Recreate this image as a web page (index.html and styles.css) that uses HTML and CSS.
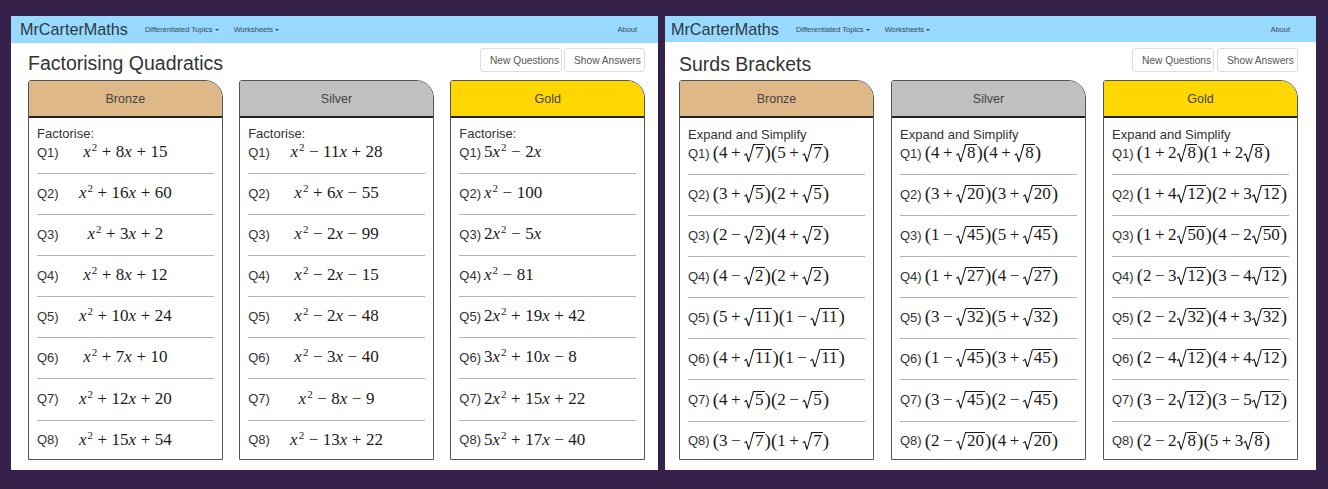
FILE: index.html
```html
<!DOCTYPE html>
<html lang="en">
  <head>
    <meta charset="UTF-8" />
    <title>MrCarterMaths</title>
    <link rel="stylesheet" href="styles.css">
  </head>
  <body>
    <div class="screen">
      <!-- left window -->
      <div class="panel panel-left">
        <div class="navbar">
          <a class="brand">MrCarterMaths</a>
          <a class="nav-link">Differentiated Topics<span class="caret"></span></a>
          <a class="nav-link">Worksheets<span class="caret"></span></a>
          <a class="nav-link about">About</a>
        </div>
        <div class="content">
          <div class="title-row">
            <h1 class="title">Factorising Quadratics</h1>
            <div class="buttons">
              <button class="btn">New Questions</button>
              <button class="btn">Show Answers</button>
            </div>
          </div>
          <div class="cards">
            <div class="card">
              <div class="card-head bronze">Bronze</div>
              <div class="card-body centred">
                <div class="instr">Factorise:</div>
                <div class="q"><span class="qn">Q1)</span><span class="m"><i>x</i><sup>2</sup><b>+</b>8<i>x</i><b>+</b>15</span></div>
                <div class="q"><span class="qn">Q2)</span><span class="m"><i>x</i><sup>2</sup><b>+</b>16<i>x</i><b>+</b>60</span></div>
                <div class="q"><span class="qn">Q3)</span><span class="m"><i>x</i><sup>2</sup><b>+</b>3<i>x</i><b>+</b>2</span></div>
                <div class="q"><span class="qn">Q4)</span><span class="m"><i>x</i><sup>2</sup><b>+</b>8<i>x</i><b>+</b>12</span></div>
                <div class="q"><span class="qn">Q5)</span><span class="m"><i>x</i><sup>2</sup><b>+</b>10<i>x</i><b>+</b>24</span></div>
                <div class="q"><span class="qn">Q6)</span><span class="m"><i>x</i><sup>2</sup><b>+</b>7<i>x</i><b>+</b>10</span></div>
                <div class="q"><span class="qn">Q7)</span><span class="m"><i>x</i><sup>2</sup><b>+</b>12<i>x</i><b>+</b>20</span></div>
                <div class="q"><span class="qn">Q8)</span><span class="m"><i>x</i><sup>2</sup><b>+</b>15<i>x</i><b>+</b>54</span></div>
              </div>
            </div>
            <div class="card">
              <div class="card-head silver">Silver</div>
              <div class="card-body centred">
                <div class="instr">Factorise:</div>
                <div class="q"><span class="qn">Q1)</span><span class="m"><i>x</i><sup>2</sup><b>−</b>11<i>x</i><b>+</b>28</span></div>
                <div class="q"><span class="qn">Q2)</span><span class="m"><i>x</i><sup>2</sup><b>+</b>6<i>x</i><b>−</b>55</span></div>
                <div class="q"><span class="qn">Q3)</span><span class="m"><i>x</i><sup>2</sup><b>−</b>2<i>x</i><b>−</b>99</span></div>
                <div class="q"><span class="qn">Q4)</span><span class="m"><i>x</i><sup>2</sup><b>−</b>2<i>x</i><b>−</b>15</span></div>
                <div class="q"><span class="qn">Q5)</span><span class="m"><i>x</i><sup>2</sup><b>−</b>2<i>x</i><b>−</b>48</span></div>
                <div class="q"><span class="qn">Q6)</span><span class="m"><i>x</i><sup>2</sup><b>−</b>3<i>x</i><b>−</b>40</span></div>
                <div class="q"><span class="qn">Q7)</span><span class="m"><i>x</i><sup>2</sup><b>−</b>8<i>x</i><b>−</b>9</span></div>
                <div class="q"><span class="qn">Q8)</span><span class="m"><i>x</i><sup>2</sup><b>−</b>13<i>x</i><b>+</b>22</span></div>
              </div>
            </div>
            <div class="card">
              <div class="card-head gold">Gold</div>
              <div class="card-body">
                <div class="instr">Factorise:</div>
                <div class="q"><span class="qn">Q1)</span><span class="m">5<i>x</i><sup>2</sup><b>−</b>2<i>x</i></span></div>
                <div class="q"><span class="qn">Q2)</span><span class="m"><i>x</i><sup>2</sup><b>−</b>100</span></div>
                <div class="q"><span class="qn">Q3)</span><span class="m">2<i>x</i><sup>2</sup><b>−</b>5<i>x</i></span></div>
                <div class="q"><span class="qn">Q4)</span><span class="m"><i>x</i><sup>2</sup><b>−</b>81</span></div>
                <div class="q"><span class="qn">Q5)</span><span class="m">2<i>x</i><sup>2</sup><b>+</b>19<i>x</i><b>+</b>42</span></div>
                <div class="q"><span class="qn">Q6)</span><span class="m">3<i>x</i><sup>2</sup><b>+</b>10<i>x</i><b>−</b>8</span></div>
                <div class="q"><span class="qn">Q7)</span><span class="m">2<i>x</i><sup>2</sup><b>+</b>15<i>x</i><b>+</b>22</span></div>
                <div class="q"><span class="qn">Q8)</span><span class="m">5<i>x</i><sup>2</sup><b>+</b>17<i>x</i><b>−</b>40</span></div>
              </div>
            </div>
          </div>
        </div>
      </div>

      <!-- right window -->
      <div class="panel panel-right">
        <div class="navbar">
          <a class="brand">MrCarterMaths</a>
          <a class="nav-link">Differentiated Topics<span class="caret"></span></a>
          <a class="nav-link">Worksheets<span class="caret"></span></a>
          <a class="nav-link about">About</a>
        </div>
        <div class="content">
          <div class="title-row">
            <h1 class="title">Surds Brackets</h1>
            <div class="buttons">
              <button class="btn">New Questions</button>
              <button class="btn">Show Answers</button>
            </div>
          </div>
          <div class="cards">
            <div class="card">
              <div class="card-head bronze">Bronze</div>
              <div class="card-body">
                <div class="instr">Expand and Simplify</div>
                <div class="q"><span class="qn">Q1)</span><span class="m"><u>(</u>4<b>+</b><s>7</s><u>)</u><u>(</u>5<b>+</b><s>7</s><u>)</u></span></div>
                <div class="q"><span class="qn">Q2)</span><span class="m"><u>(</u>3<b>+</b><s>5</s><u>)</u><u>(</u>2<b>+</b><s>5</s><u>)</u></span></div>
                <div class="q"><span class="qn">Q3)</span><span class="m"><u>(</u>2<b>−</b><s>2</s><u>)</u><u>(</u>4<b>+</b><s>2</s><u>)</u></span></div>
                <div class="q"><span class="qn">Q4)</span><span class="m"><u>(</u>4<b>−</b><s>2</s><u>)</u><u>(</u>2<b>+</b><s>2</s><u>)</u></span></div>
                <div class="q"><span class="qn">Q5)</span><span class="m"><u>(</u>5<b>+</b><s>11</s><u>)</u><u>(</u>1<b>−</b><s>11</s><u>)</u></span></div>
                <div class="q"><span class="qn">Q6)</span><span class="m"><u>(</u>4<b>+</b><s>11</s><u>)</u><u>(</u>1<b>−</b><s>11</s><u>)</u></span></div>
                <div class="q"><span class="qn">Q7)</span><span class="m"><u>(</u>4<b>+</b><s>5</s><u>)</u><u>(</u>2<b>−</b><s>5</s><u>)</u></span></div>
                <div class="q"><span class="qn">Q8)</span><span class="m"><u>(</u>3<b>−</b><s>7</s><u>)</u><u>(</u>1<b>+</b><s>7</s><u>)</u></span></div>
              </div>
            </div>
            <div class="card">
              <div class="card-head silver">Silver</div>
              <div class="card-body">
                <div class="instr">Expand and Simplify</div>
                <div class="q"><span class="qn">Q1)</span><span class="m"><u>(</u>4<b>+</b><s>8</s><u>)</u><u>(</u>4<b>+</b><s>8</s><u>)</u></span></div>
                <div class="q"><span class="qn">Q2)</span><span class="m"><u>(</u>3<b>+</b><s>20</s><u>)</u><u>(</u>3<b>+</b><s>20</s><u>)</u></span></div>
                <div class="q"><span class="qn">Q3)</span><span class="m"><u>(</u>1<b>−</b><s>45</s><u>)</u><u>(</u>5<b>+</b><s>45</s><u>)</u></span></div>
                <div class="q"><span class="qn">Q4)</span><span class="m"><u>(</u>1<b>+</b><s>27</s><u>)</u><u>(</u>4<b>−</b><s>27</s><u>)</u></span></div>
                <div class="q"><span class="qn">Q5)</span><span class="m"><u>(</u>3<b>−</b><s>32</s><u>)</u><u>(</u>5<b>+</b><s>32</s><u>)</u></span></div>
                <div class="q"><span class="qn">Q6)</span><span class="m"><u>(</u>1<b>−</b><s>45</s><u>)</u><u>(</u>3<b>+</b><s>45</s><u>)</u></span></div>
                <div class="q"><span class="qn">Q7)</span><span class="m"><u>(</u>3<b>−</b><s>45</s><u>)</u><u>(</u>2<b>−</b><s>45</s><u>)</u></span></div>
                <div class="q"><span class="qn">Q8)</span><span class="m"><u>(</u>2<b>−</b><s>20</s><u>)</u><u>(</u>4<b>+</b><s>20</s><u>)</u></span></div>
              </div>
            </div>
            <div class="card">
              <div class="card-head gold">Gold</div>
              <div class="card-body">
                <div class="instr">Expand and Simplify</div>
                <div class="q"><span class="qn">Q1)</span><span class="m"><u>(</u>1<b>+</b>2<s>8</s><u>)</u><u>(</u>1<b>+</b>2<s>8</s><u>)</u></span></div>
                <div class="q"><span class="qn">Q2)</span><span class="m"><u>(</u>1<b>+</b>4<s>12</s><u>)</u><u>(</u>2<b>+</b>3<s>12</s><u>)</u></span></div>
                <div class="q"><span class="qn">Q3)</span><span class="m"><u>(</u>1<b>+</b>2<s>50</s><u>)</u><u>(</u>4<b>−</b>2<s>50</s><u>)</u></span></div>
                <div class="q"><span class="qn">Q4)</span><span class="m"><u>(</u>2<b>−</b>3<s>12</s><u>)</u><u>(</u>3<b>−</b>4<s>12</s><u>)</u></span></div>
                <div class="q"><span class="qn">Q5)</span><span class="m"><u>(</u>2<b>−</b>2<s>32</s><u>)</u><u>(</u>4<b>+</b>3<s>32</s><u>)</u></span></div>
                <div class="q"><span class="qn">Q6)</span><span class="m"><u>(</u>2<b>−</b>4<s>12</s><u>)</u><u>(</u>4<b>+</b>4<s>12</s><u>)</u></span></div>
                <div class="q"><span class="qn">Q7)</span><span class="m"><u>(</u>3<b>−</b>2<s>12</s><u>)</u><u>(</u>3<b>−</b>5<s>12</s><u>)</u></span></div>
                <div class="q"><span class="qn">Q8)</span><span class="m"><u>(</u>2<b>−</b>2<s>8</s><u>)</u><u>(</u>5<b>+</b>3<s>8</s><u>)</u></span></div>
              </div>
            </div>
          </div>
        </div>
      </div>
    </div>
  </body>
</html>
```
FILE: styles.css
```css
* {
  margin: 0;
  padding: 0;
  box-sizing: border-box;
}

body {
  width: 1328px;
  height: 489px;
  background: #35214a;
  font-family: "Liberation Sans", Arial, sans-serif;
  color: #333;
  overflow: hidden;
}

.screen {
  display: flex;
  gap: 7px;
  padding: 16px 0 0 11px;
}

.panel {
  height: 454px;
  background: #fff;
}

.panel-left {
  width: 647px;
}

.panel-right {
  width: 651px;
}

.navbar {
  display: flex;
  align-items: center;
  height: 27px;
  background: #97d9ff;
  padding-left: 9px;
}

.panel-right .navbar {
  height: 26px;
  padding-left: 6px;
}

.brand {
  font-size: 16.2px;
  color: #2f3a40;
  margin-right: 17px;
}

.nav-link {
  font-size: 7.5px;
  color: #3a4a55;
  margin-right: 15px;
}

.about {
  margin-left: auto;
  margin-right: 21px;
}

.panel-right .about {
  margin-right: 26px;
}

.caret {
  display: inline-block;
  margin-left: 2px;
  vertical-align: middle;
  border-top: 2px solid #3a4a55;
  border-left: 2px solid transparent;
  border-right: 2px solid transparent;
}

.content {
  padding: 5px 13px 0 17px;
}

.panel-right .content {
  padding: 6px 18px 0 14px;
}

.title-row {
  display: flex;
  justify-content: space-between;
  align-items: flex-end;
  height: 32px;
  padding-bottom: 2px;
}

.panel-right .title-row {
  padding-bottom: 1px;
}

.title {
  font-size: 19.5px;
  font-weight: 400;
  line-height: 30px;
  color: #333;
}

.buttons {
  display: flex;
  gap: 2px;
  align-self: flex-start;
}

.panel-right .buttons {
  gap: 3px;
}

.btn {
  width: 82px;
  height: 24px;
  background: #fff;
  border: 1px solid #ddd;
  border-radius: 3px;
  padding-left: 9px;
  text-align: left;
  font-family: "Liberation Sans", Arial, sans-serif;
  font-size: 10.2px;
  color: #555;
}

.btn + .btn {
  width: 81px;
}

.cards {
  display: grid;
  grid-template-columns: repeat(3, 1fr);
  gap: 16.5px;
}

.panel-right .cards {
  gap: 17px;
}

.card {
  height: 380px;
  border: 1px solid #555;
  border-radius: 3px 18px 0 0;
  overflow: hidden;
}

.card-head {
  height: 37px;
  display: flex;
  align-items: center;
  justify-content: center;
  font-size: 12.5px;
  color: #444;
  border-bottom: 2px solid #222;
}

.bronze {
  background: #deb887;
}

.silver {
  background: #c0c0c0;
}

.gold {
  background: #ffd700;
}

.card-body {
  padding: 8px 8px 0;
}

.panel-right .card-body {
  padding-top: 9px;
}

.instr {
  font-size: 13px;
  line-height: 16px;
}

.q {
  display: flex;
  align-items: center;
  gap: 3px;
  height: 20px;
  box-sizing: content-box;
  padding-bottom: 11px;
  border-bottom: 1px solid #b3b3b3;
  margin-bottom: 9.1px;
  font-size: 13px;
}

.q:last-child {
  border-bottom: 0;
}

.card-body.centred .q {
  display: grid;
  grid-template-columns: 1fr auto 1fr;
}

.m {
  font-family: "Liberation Serif", "Times New Roman", serif;
  font-size: 17px;
  color: #1a1a1a;
  white-space: nowrap;
}

.m i {
  font-style: italic;
}

.m sup {
  font-size: 11px;
  line-height: 0;
  vertical-align: 6px;
  margin-left: 1px;
}

/* operators */
.m b {
  font-weight: 400;
  margin: 0 3.5px;
}

.panel-left .m b {
  margin: 0 4.5px;
}

/* stretched brackets */
.m u {
  text-decoration: none;
  font-size: 19px;
  line-height: 0;
  font-weight: 400;
  position: relative;
  top: 1px;
}

/* surd: radical sign is a clipped box, radicand sits under the top rule */
.m s {
  display: inline-block;
  position: relative;
  text-decoration: none;
  line-height: 16px;
  margin-left: 10px;
  padding: 0 1px;
  border-top: 1px solid #1a1a1a;
}

.m s::before {
  content: "";
  position: absolute;
  left: -10px;
  top: -1px;
  width: 10px;
  height: 18px;
  background: #1a1a1a;
  clip-path: polygon(0 60%, 25% 50%, 48% 86%, 90% 0, 100% 0, 100% 5%, 50% 100%, 40% 100%, 20% 60%, 5% 65%);
}
```
